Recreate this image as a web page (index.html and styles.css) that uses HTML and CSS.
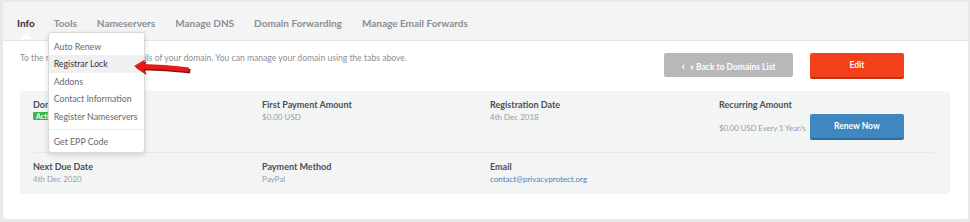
FILE: index.html
```html
<!DOCTYPE html>
<html>
<head>
<meta charset="utf-8">
<link rel="stylesheet" href="styles.css">
</head>
<body>
<div class="card">
  <nav class="tabs">
    <span class="tab active">Info</span>
    <span class="tab tools">Tools
      <div class="menu">
        <div class="item">Auto Renew</div>
        <div class="item hl">Registrar Lock</div>
        <div class="item">Addons</div>
        <div class="item">Contact Information</div>
        <div class="item">Register Nameservers</div>
        <div class="sep"></div>
        <div class="item">Get EPP Code</div>
      </div>
      <svg class="arrow" width="62" height="20" viewBox="0 0 62 20">
        <path d="M3 8 L14 1.5 L12.5 6 C26 6.5 40 7 58 9.5 L57.5 14 C40 12 26 11 12.5 11 L14 15.5 Z" fill="#8a1010" transform="translate(1.5,1.5)"/>
        <path d="M3 8 L14 1.5 L12.5 6 C26 6.5 40 7 58 9.5 L57.5 14 C40 12 26 11 12.5 11 L14 15.5 Z" fill="#e81919"/>
      </svg>
    </span>
    <span class="tab">Nameservers</span>
    <span class="tab">Manage DNS</span>
    <span class="tab">Domain Forwarding</span>
    <span class="tab">Manage Email Forwards</span>
  </nav>
  <div class="body">
    <div class="top">
      <p class="intro">To the right you can find the details of your domain. You can manage your domain using the tabs above.</p>
      <div class="actions">
        <button class="btn back"><span class="chev">&lsaquo;</span> &laquo; Back to Domains List</button>
        <button class="btn edit">Edit</button>
      </div>
    </div>
    <div class="panel">
      <div class="row">
        <div class="cell">
          <div class="label">Domain privacyprotect.com</div>
          <span class="badge">Active</span>
        </div>
        <div class="cell">
          <div class="label">First Payment Amount</div>
          <div class="value">$0.00 USD</div>
        </div>
        <div class="cell">
          <div class="label">Registration Date</div>
          <div class="value">4th Dec 2018</div>
        </div>
        <div class="cell">
          <div class="label">Recurring Amount</div>
          <div class="recur">
            <span class="value">$0.00 USD Every 1 Year/s</span>
            <button class="btn renew">Renew Now</button>
          </div>
        </div>
      </div>
      <div class="row second">
        <div class="cell">
          <div class="label">Next Due Date</div>
          <div class="value">4th Dec 2020</div>
        </div>
        <div class="cell">
          <div class="label">Payment Method</div>
          <div class="value">PayPal</div>
        </div>
        <div class="cell">
          <div class="label">Email</div>
          <a class="value link">contact@privacyprotect.org</a>
        </div>
        <div class="cell"></div>
      </div>
    </div>
  </div>
</div>
</body>
</html>
```
FILE: styles.css
```css
* { box-sizing: border-box; }
html, body { margin: 0; padding: 0; }
body {
  background: #e9e9e9;
  font-family: Lato, "Open Sans", Arial, sans-serif;
  width: 970px;
  height: 222px;
  padding: 2px 2px 3px 3px;
}
.card {
  background: #fff;
  border-radius: 3px;
  height: 217px;
  width: 965px;
  position: relative;
}
.tabs {
  display: flex;
  height: 39px;
  background: #f4f4f4;
  border-bottom: 1px solid #e4e4e4;
  border-radius: 3px 3px 0 0;
  padding: 3px 0 0 14px;
  align-items: center;
}
.tab {
  font-size: 10px;
  font-weight: 700;
  color: #8a8f94;
  margin-right: 20px;
  position: relative;
  line-height: 14px;
}
.tab.active { color: #2b2f33; margin-right: 19px; }
.tab.active::after {
  content: "";
  position: absolute;
  left: 50%;
  margin-left: -6px;
  top: 17px;
  border-left: 6px solid transparent;
  border-right: 6px solid transparent;
  border-bottom: 6px solid #fff;
}
.menu {
  position: absolute;
  top: 16px;
  left: -6px;
  width: 97px;
  background: #fff;
  border: 1px solid #d9d9d9;
  border-radius: 3px;
  box-shadow: 0 2px 5px rgba(0,0,0,0.15);
  padding: 5px 0 1px;
  z-index: 5;
  font-weight: 400;
}
.item {
  font-size: 8.8px;
  color: #666a6e;
  padding: 0 5px;
  height: 17.5px;
  line-height: 17.5px;
  white-space: nowrap;
}
.item.hl { background: #f0f0f0; color: #33373b; }
.sep { height: 1px; background: #ebebeb; margin: 4px 0 3px; }
.arrow {
  position: absolute;
  left: 77px;
  top: 42px;
  z-index: 6;
}
.body { padding: 0 17px 0 17px; }
.top {
  display: flex;
  justify-content: space-between;
  align-items: flex-start;
  height: 50px;
  padding-top: 12px;
}
.intro {
  margin: 0;
  font-size: 8.6px;
  color: #8c9196;
}
.actions { display: flex; gap: 17px; margin-right: 47px; }
.btn {
  font-family: inherit;
  border: none;
  color: #fff;
  font-weight: 700;
  font-size: 8.5px;
  border-radius: 2px;
  cursor: pointer;
}
.back {
  background: #b8b8b8;
  width: 129px;
  height: 24px;
}
.chev { font-size: 12px; margin-right: 3px; }
.edit {
  background: #f2401a;
  width: 94px;
  height: 26px;
  border-bottom: 2px solid #c82f10;
}
.panel {
  background: #f3f4f4;
  border-radius: 3px;
  width: 930px;
  padding: 0 13px 0 13px;
  height: 103px;
  position: relative;
}
.row {
  display: grid;
  grid-template-columns: 229px 228px 229px 1fr;
  padding-top: 8px;
  height: 62px;
  border-bottom: 1px solid #e8e9e9;
  margin-right: 2px;
}
.row.second { border-bottom: none; padding-top: 8px; height: 40px; }
.label {
  font-size: 9px;
  font-weight: 700;
  color: #4b5055;
  line-height: 12px;
}
.value {
  font-size: 8px;
  color: #9a9ea2;
  line-height: 11px;
  margin-top: 1px;
  display: block;
}
.link { color: #4a7fc0; }
.badge {
  display: inline-block;
  background: #3cb64a;
  color: #fff;
  font-size: 7px;
  font-weight: 700;
  padding: 0 3px;
  height: 8px;
  line-height: 8px;
  border-radius: 1px;
  vertical-align: top;
  margin-top: 1px;
}
.recur { display: flex; align-items: center; gap: 4px; margin-top: 3px; }
.recur .value { margin-top: 2px; letter-spacing: -0.15px; }
.renew {
  background: #3e87c0;
  width: 94px;
  height: 26px;
  border-bottom: 2px solid #2f6f9f;
}
```
